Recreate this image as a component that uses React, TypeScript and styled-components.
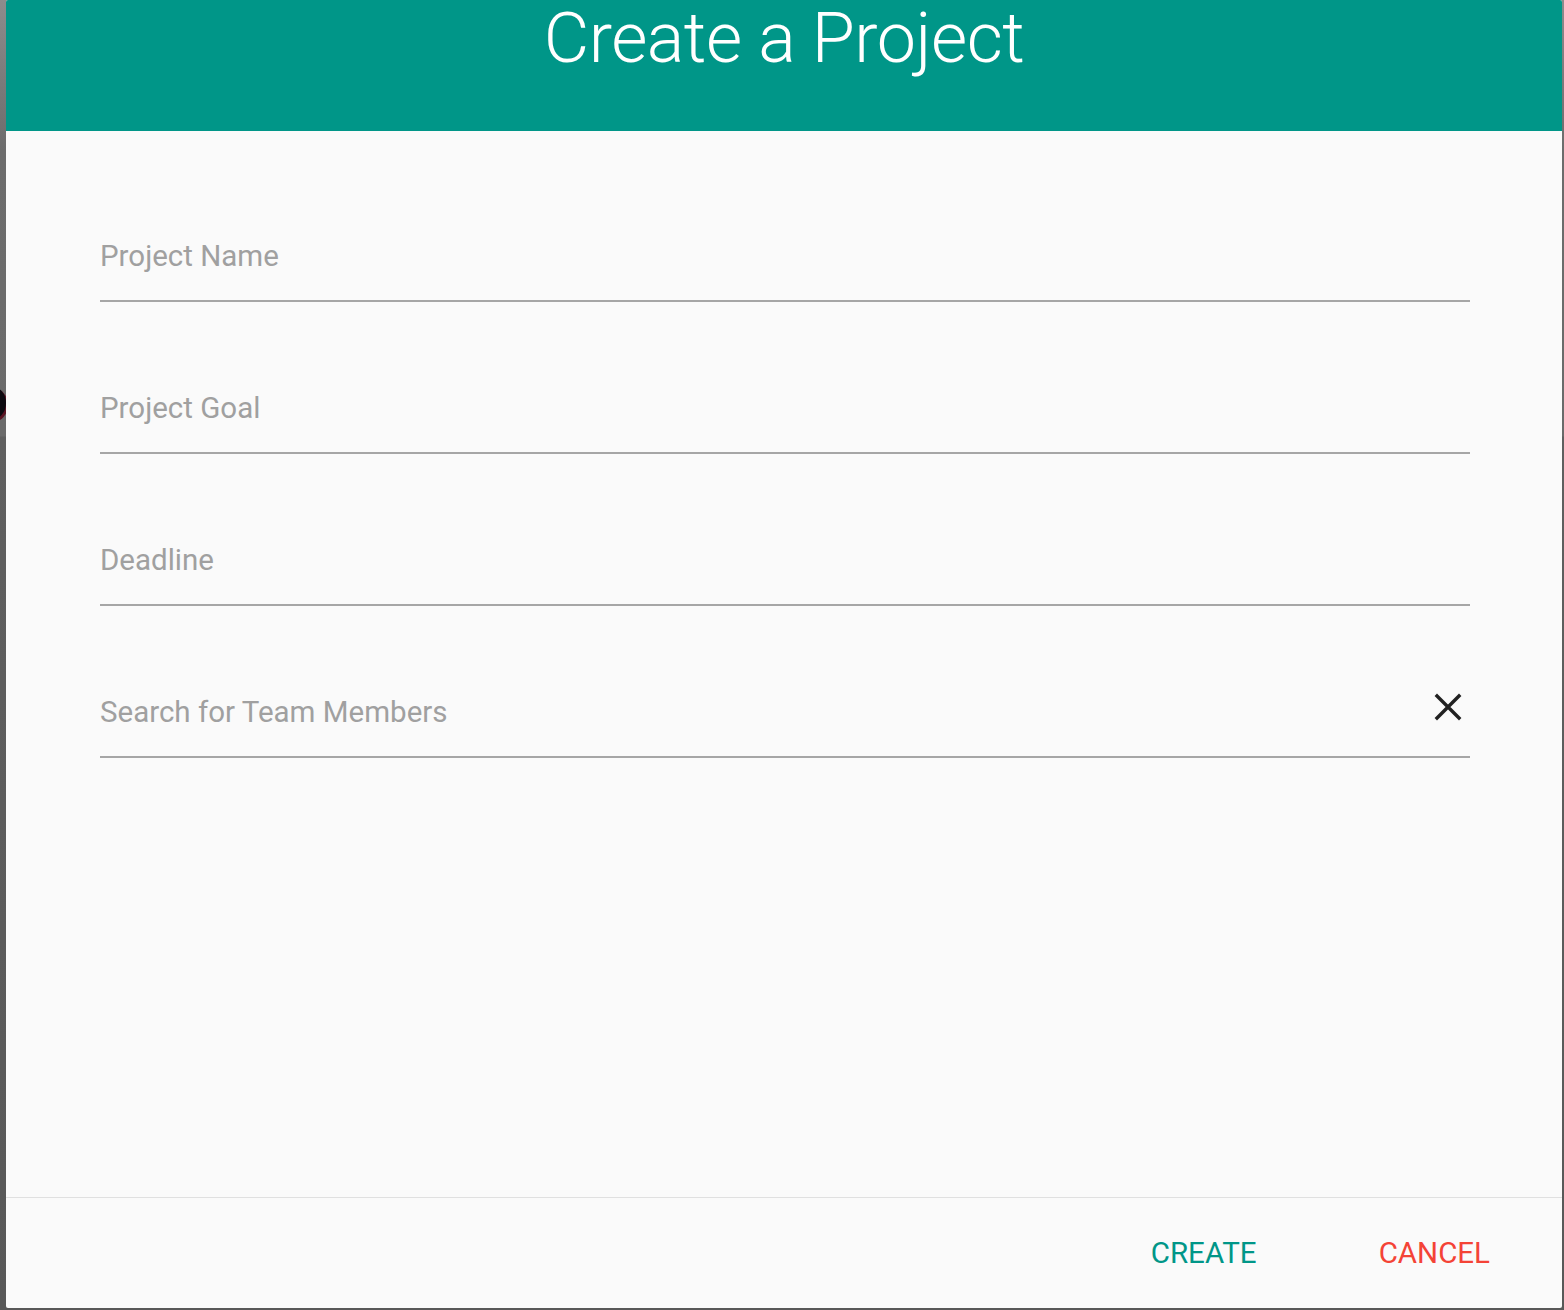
import React from 'react';
import styled, { createGlobalStyle } from 'styled-components';

const GlobalStyle = createGlobalStyle`
  html, body {
    margin: 0;
    padding: 0;
    font-family: Roboto, 'Liberation Sans', Arial, sans-serif;
  }
`;

const Backdrop = styled.div`
  position: relative;
  box-sizing: border-box;
  width: 1564px;
  height: 1310px;
  padding: 0 2px 2px 6px;
  display: flex;
  overflow: hidden;
  background: linear-gradient(
    180deg,
    #8c8c8c 0,
    #6c6c6c 150px,
    #6a6a6a 436px,
    #5f5f5f 437px,
    #585858 100%
  );
`;

/* a bit of the page behind the overlay peeking out at the left edge */
const PeekingAvatar = styled.span`
  position: absolute;
  left: -24px;
  top: 386px;
  width: 30px;
  height: 34px;
  border-radius: 50%;
  background: #0c0a10;
  box-shadow: 2px 2px 0 #5a1322;
`;

const Dialog = styled.div`
  position: relative;
  z-index: 1;
  flex: 1;
  display: flex;
  flex-direction: column;
  background: #fafafa;
  border-radius: 2px;
  overflow: hidden;
`;

const Header = styled.header`
  height: 131px;
  flex-shrink: 0;
  background: #009688;
  display: flex;
  justify-content: center;
  align-items: flex-start;
`;

const Title = styled.h1`
  margin: 0;
  padding-top: 3px;
  color: #ffffff;
  font-size: 70px;
  font-weight: 300;
  line-height: 1;
  letter-spacing: -0.5px;
`;

const Body = styled.div`
  flex: 1;
  padding: 19px 92px 0 94px;
  display: flex;
  flex-direction: column;
`;

const Field = styled.div`
  box-sizing: border-box;
  height: 152px;
  display: flex;
  align-items: flex-end;
  justify-content: space-between;
  border-bottom: 2px solid #a6a6a6;
  padding-bottom: 29px;
`;

const Placeholder = styled.span`
  color: #a0a0a0;
  font-size: 29.5px;
  line-height: 1;
`;

const ClearButton = styled.button`
  width: 44px;
  height: 44px;
  margin-bottom: -2px;
  padding: 0;
  border: 0;
  background: transparent;
  display: flex;
  align-items: center;
  justify-content: center;
  cursor: pointer;
`;

const Footer = styled.footer`
  height: 111px;
  flex-shrink: 0;
  box-sizing: border-box;
  border-top: 1px solid #e0e0e0;
  display: flex;
  justify-content: flex-end;
  align-items: flex-start;
  gap: 90px;
  padding: 41px 56px 0 0;
`;

const TextButton = styled.button<{ $tone: 'primary' | 'danger' }>`
  padding: 0 16px;
  border: 0;
  background: transparent;
  font-family: inherit;
  font-size: 29.5px;
  line-height: 1;
  color: ${(p) => (p.$tone === 'primary' ? '#009688' : '#f44336')};
  cursor: pointer;
`;

const fields = ['Project Name', 'Project Goal', 'Deadline'];

export default function App() {
  return (
    <>
      <GlobalStyle />
      <Backdrop>
        <PeekingAvatar />
        <Dialog>
          <Header>
            <Title>Create a Project</Title>
          </Header>

          <Body>
            {fields.map((f) => (
              <Field key={f}>
                <Placeholder>{f}</Placeholder>
              </Field>
            ))}
            <Field>
              <Placeholder>Search for Team Members</Placeholder>
              <ClearButton aria-label="clear">
                <svg width="28" height="28" viewBox="0 0 28 28">
                  <path
                    d="M3 3 L25 25 M25 3 L3 25"
                    stroke="#212121"
                    strokeWidth="3.4"
                    strokeLinecap="square"
                    fill="none"
                  />
                </svg>
              </ClearButton>
            </Field>
          </Body>

          <Footer>
            <TextButton $tone="primary">CREATE</TextButton>
            <TextButton $tone="danger">CANCEL</TextButton>
          </Footer>
        </Dialog>
      </Backdrop>
    </>
  );
}
